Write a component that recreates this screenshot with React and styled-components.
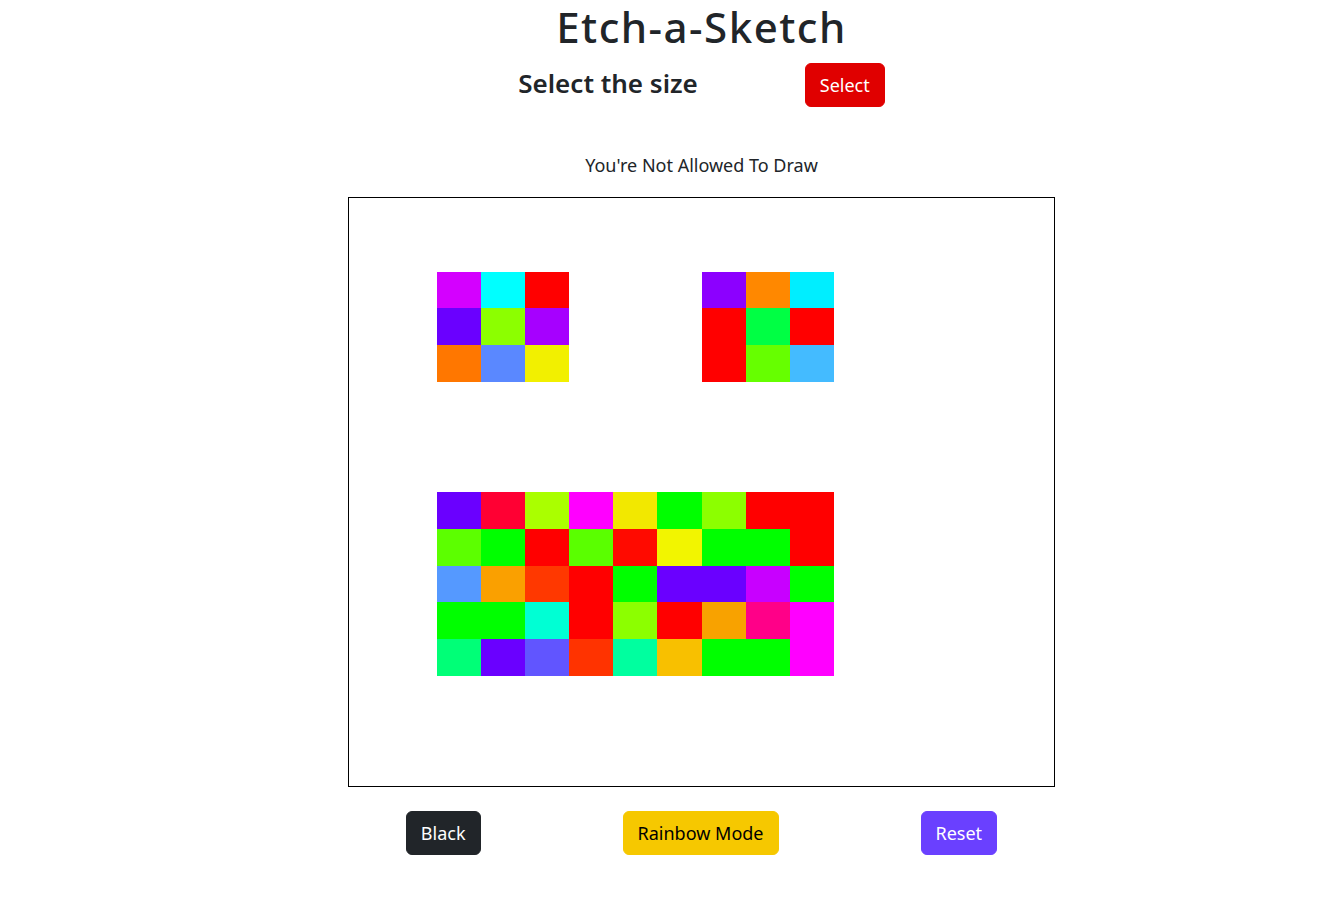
import styled, { createGlobalStyle } from "styled-components";

const GlobalStyle = createGlobalStyle`
  body {
    margin: 0;
    background: #fff;
    color: #212529;
    font-family: "Noto Sans", "Open Sans", sans-serif;
  }
`;

const SIZE = 16;

// painted cells: [row, col, colour]
const painted = [
  [2, 2, "#d400ff"], [2, 3, "#00ffff"], [2, 4, "#ff0000"],
  [3, 2, "#6a00ff"], [3, 3, "#8cff00"], [3, 4, "#a600ff"],
  [4, 2, "#ff7700"], [4, 3, "#5a88ff"], [4, 4, "#f2f000"],

  [2, 8, "#8c00ff"], [2, 9, "#ff8800"], [2, 10, "#00eeff"],
  [3, 8, "#ff0000"], [3, 9, "#00ff44"], [3, 10, "#ff0000"],
  [4, 8, "#ff0000"], [4, 9, "#66ff00"], [4, 10, "#44bbff"],
];

const mouth = [
  ["#6a00ff", "#ff0033", "#aaff00", "#ff00ff", "#f2e800", "#00ff00", "#8cff00", "#ff0000", "#ff0000"],
  ["#5cff00", "#00ff00", "#ff0000", "#5aff00", "#ff0a00", "#f2f500", "#00ff00", "#00ff00", "#ff0000"],
  ["#5599ff", "#faa000", "#ff3800", "#ff0000", "#00ff00", "#6a00ff", "#6a00ff", "#c800ff", "#00ff00"],
  ["#00ff00", "#00ff00", "#00ffd4", "#ff0000", "#8cff00", "#ff0000", "#f8a200", "#ff0088", "#ff00ff"],
  ["#00ff77", "#6a00ff", "#6155ff", "#ff3300", "#00ff9f", "#f8c000", "#00ff00", "#00ff00", "#ff00ff"],
];
mouth.forEach((row, r) => row.forEach((c, i) => painted.push([8 + r, 2 + i, c])));

const colourAt = {};
painted.forEach(([r, c, col]) => { colourAt[r * SIZE + c] = col; });

const Page = styled.div`
  display: flex;
  flex-direction: column;
  align-items: center;
  padding-left: 70px;
`;

const Title = styled.h1`
  margin: 0;
  font-size: 42px;
  font-weight: 500;
  letter-spacing: 1.5px;
  line-height: 54px;
`;

const SizeRow = styled.div`
  display: flex;
  align-items: center;
  gap: 107px;
  margin-top: 9px;
`;

const SizeLabel = styled.h3`
  margin: 0 0 4px;
  font-size: 26px;
  font-weight: 600;
`;

const Button = styled.button`
  font-family: inherit;
  font-size: 18px;
  line-height: 26px;
  padding: 8px 14px;
  border: 1px solid ${(p) => p.bg};
  border-radius: 6px;
  background-color: ${(p) => p.bg};
  color: ${(p) => p.fg || "#fff"};
  cursor: pointer;
`;

const Status = styled.p`
  margin: 45px 0 0;
  font-size: 18px;
  line-height: 26px;
`;

const Board = styled.div`
  margin-top: 19px;
  width: 705px;
  height: 588px;
  border: 1px solid #000;
  display: grid;
  grid-template-columns: repeat(${SIZE}, 1fr);
  grid-template-rows: repeat(${SIZE}, 1fr);
`;

const Cell = styled.div`
  background-color: ${(p) => p.colour || "transparent"};
`;

const Controls = styled.div`
  display: flex;
  gap: 142px;
  margin-top: 24px;
`;

export default function App() {
  const cells = Array.from({ length: SIZE * SIZE }, (_, i) => (
    <Cell key={i} colour={colourAt[i]} />
  ));
  return (
    <>
      <GlobalStyle />
      <Page>
        <Title>Etch-a-Sketch</Title>
        <SizeRow>
          <SizeLabel>Select the size</SizeLabel>
          <Button bg="#e00000">Select</Button>
        </SizeRow>
        <Status>You're Not Allowed To Draw</Status>
        <Board>{cells}</Board>
        <Controls>
          <Button bg="#212529">Black</Button>
          <Button bg="#f6c800" fg="#000">Rainbow Mode</Button>
          <Button bg="#6a40ff">Reset</Button>
        </Controls>
      </Page>
    </>
  );
}
